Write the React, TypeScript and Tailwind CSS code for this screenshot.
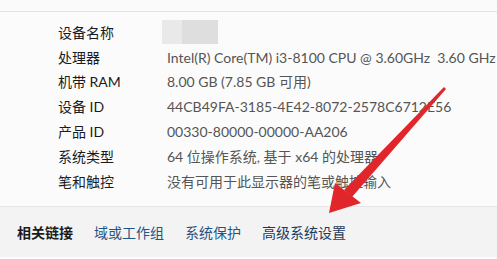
const rows = [
  { label: "设备名称", value: null },
  { label: "处理器", value: "cpu" },
  { label: "机带 RAM", value: "8.00 GB (7.85 GB 可用)" },
  { label: "设备 ID", value: "44CB49FA-3185-4E42-8072-2578C6712E56" },
  { label: "产品 ID", value: "00330-80000-00000-AA206" },
  { label: "系统类型", value: "64 位操作系统, 基于 x64 的处理器" },
  { label: "笔和触控", value: "没有可用于此显示器的笔或触控输入" },
];

function Arrow() {
  return (
    <svg
      className="pointer-events-none absolute left-0 top-0"
      width="497"
      height="259"
      viewBox="0 0 497 259"
    >
      <polygon points="444,87 446,89 352,197 344,190" fill="#e0262b" />
      <polygon points="329,213 335,183 361,203" fill="#e0262b" />
    </svg>
  );
}

export default function App() {
  return (
    <div
      className="relative h-[259px] w-[497px] overflow-hidden bg-[#fbfbfb]"
      style={{ fontFamily: '"Lato", "Noto Sans CJK SC", sans-serif' }}
    >
      <div className="h-[12px] border-b border-[#e3e3e3] bg-[#fafafa]" />

      <div className="pl-[58px] pt-[8px]">
        {rows.map((r) => (
          <div key={r.label} className="flex h-[24.8px] items-center text-[14px]">
            <div className="w-[109px] shrink-0 text-[#1b1b1b]">{r.label}</div>
            {r.value === null && (
              <div className="flex h-[24px] w-[60px] -translate-x-[5px]">
                <div className="h-full w-[20px] bg-[#e9e9e9]" />
                <div className="h-full w-[36px] bg-[#dedede]" />
              </div>
            )}
            {r.value === "cpu" && (
              <div className="flex whitespace-nowrap text-[#555]">
                <span>Intel(R) Core(TM) i3-8100 CPU @ 3.60GHz</span>
                <span className="ml-[7px]">3.60 GHz</span>
              </div>
            )}
            {r.value !== null && r.value !== "cpu" && (
              <div className="whitespace-nowrap text-[#555]">{r.value}</div>
            )}
          </div>
        ))}
      </div>

      <div className="absolute left-0 top-[206px] flex h-[51px] w-full items-center border-t border-[#e6e6e6] bg-[#f3f3f3] pl-[17px] text-[14px]">
        <span className="font-bold text-[#1b1b1b]">相关链接</span>
        <span className="ml-[21px] text-[#1f5585]">域或工作组</span>
        <span className="ml-[21px] text-[#1f5585]">系统保护</span>
        <span className="ml-[21px] text-[#1b3a5c]">高级系统设置</span>
      </div>

      <Arrow />
    </div>
  );
}
